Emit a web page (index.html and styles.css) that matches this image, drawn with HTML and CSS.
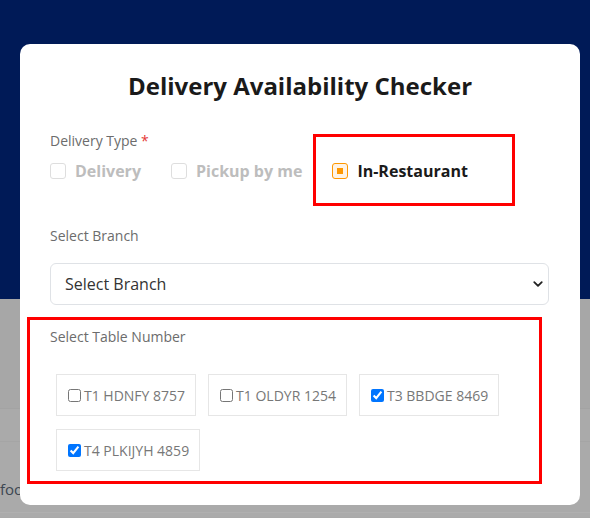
FILE: index.html
```html
<!DOCTYPE html>
<html>
<head>
<meta charset="utf-8">
<link rel="stylesheet" href="styles.css">
</head>
<body>
<div class="page">
  <div class="hero"></div>
  <div class="content">
    <div class="band b1"></div>
    <div class="band b2"></div>
    <div class="band b3"><span class="foo">food</span></div>
    <div class="band b4"></div>
  </div>
</div>
<div class="overlay">
  <div class="modal">
    <h1 class="title">Delivery Availability Checker</h1>
    <div class="field">
      <div class="label">Delivery Type <span class="req">*</span></div>
      <div class="options">
        <div class="opt disabled"><span class="box"></span><span class="opt-text">Delivery</span></div>
        <div class="opt disabled"><span class="box"></span><span class="opt-text">Pickup by me</span></div>
        <div class="opt active"><span class="box"><span class="dot"></span></span><span class="opt-text">In-Restaurant</span><span class="mark mark-opt"></span></div>
      </div>
    </div>
    <div class="field branch">
      <div class="label">Select Branch</div>
      <div class="select">
        <span>Select Branch</span>
        <svg class="chev" width="12" height="12" viewBox="0 0 16 16"><path d="M3 5.5l5 5 5-5" fill="none" stroke="#222" stroke-width="2.4" stroke-linecap="round" stroke-linejoin="round"/></svg>
      </div>
    </div>
    <div class="tables">
      <div class="label">Select Table Number</div>
      <div class="chips">
        <label class="chip"><input type="checkbox">T1 HDNFY 8757</label>
        <label class="chip"><input type="checkbox">T1 OLDYR 1254</label>
        <label class="chip"><input type="checkbox" checked>T3 BBDGE 8469</label>
        <label class="chip"><input type="checkbox" checked>T4 PLKIJYH 4859</label>
      </div>
    </div>
  </div>
</div>
</body>
</html>
```

FILE: styles.css
```css
* { box-sizing: border-box; }
html, body { margin: 0; padding: 0; }
body {
  width: 590px;
  height: 518px;
  overflow: hidden;
  font-family: "Open Sans", "Noto Sans", sans-serif;
  background: #a9a9a9;
}
.page { width: 590px; height: 518px; display: flex; flex-direction: column; }
.hero { height: 299px; background: #001a57; flex: none; }
.content { height: 219px; display: flex; flex-direction: column; }
.band { flex: none; }
.b1 { height: 110px; background: #a7a7a7; border-bottom: 1px solid #a3a3a3; }
.b2 { height: 33px; background: #aaaaaa; border-bottom: 1px solid #a5a5a5; }
.b3 {
  height: 71px;
  background: #aaaaaa;
  border-bottom: 1px solid #b0b0b0;
  display: flex;
  align-items: flex-end;
  padding-bottom: 14px;
}
.b4 { height: 4px; background: #ababab; }
.foo {
  font-size: 15px;
  color: #3d4752;
  line-height: 18px;
  margin-left: 0;
}
.overlay {
  position: fixed;
  left: 0; top: 0;
  width: 590px; height: 518px;
}
.modal {
  position: absolute;
  left: 20px; top: 44px;
  width: 560px; height: 461px;
  background: #fff;
  border-radius: 10px;
  padding: 26px 30px 0 30px;
}
.title {
  margin: 0;
  text-align: center;
  font-size: 24px;
  font-weight: 700;
  color: #1a1a1a;
  line-height: 32px;
}
.field { margin-top: 29px; }
.label {
  font-size: 14px;
  color: #6c6c6c;
  line-height: 20px;
}
.req { color: #e53935; }
.options {
  display: flex;
  align-items: center;
  margin-top: 7px;
  gap: 30px;
}
.opt {
  display: flex;
  align-items: center;
  gap: 9px;
  font-size: 16px;
  font-weight: 700;
  line-height: 26px;
  position: relative;
}
.box {
  width: 16px; height: 16px;
  border: 1px solid #dedede;
  border-radius: 3px;
  display: flex;
  align-items: center;
  justify-content: center;
}
.opt.disabled .opt-text { color: #bdbdbd; }
.opt.active .opt-text { color: #1a1a1a; }
.opt.active .box {
  border-color: #ff9800;
  background: #fff4e5;
}
.dot { width: 6px; height: 6px; background: #ff9800; }
.mark-opt {
  position: absolute;
  left: -19px; top: -24px;
  width: 202px; height: 72px;
  border: 3px solid #ff0000;
}
.branch { margin-top: 42px; }
.select {
  margin-top: 17px;
  height: 42px;
  width: 499px;
  border: 1px solid #dfe2e6;
  border-radius: 6px;
  display: flex;
  align-items: center;
  justify-content: space-between;
  padding: 0 4px 0 14px;
  font-size: 16px;
  color: #333;
}
.tables {
  margin-top: 12px;
  margin-left: -23px;
  width: 515px;
  height: 167px;
  border: 3px solid #ff0000;
  padding: 7px 0 0 20px;
}
.chips {
  display: flex;
  flex-wrap: wrap;
  gap: 13px 12px;
  margin-top: 27px;
  padding-left: 6px;
}
.chip {
  display: flex;
  align-items: center;
  height: 42px;
  padding: 0 10px 0 8px;
  border: 1px solid #e6e6e6;
  font-size: 14px;
  color: #777;
}
.chip input { margin: 0 3px 0 3px; width: 13px; height: 13px; }
```
